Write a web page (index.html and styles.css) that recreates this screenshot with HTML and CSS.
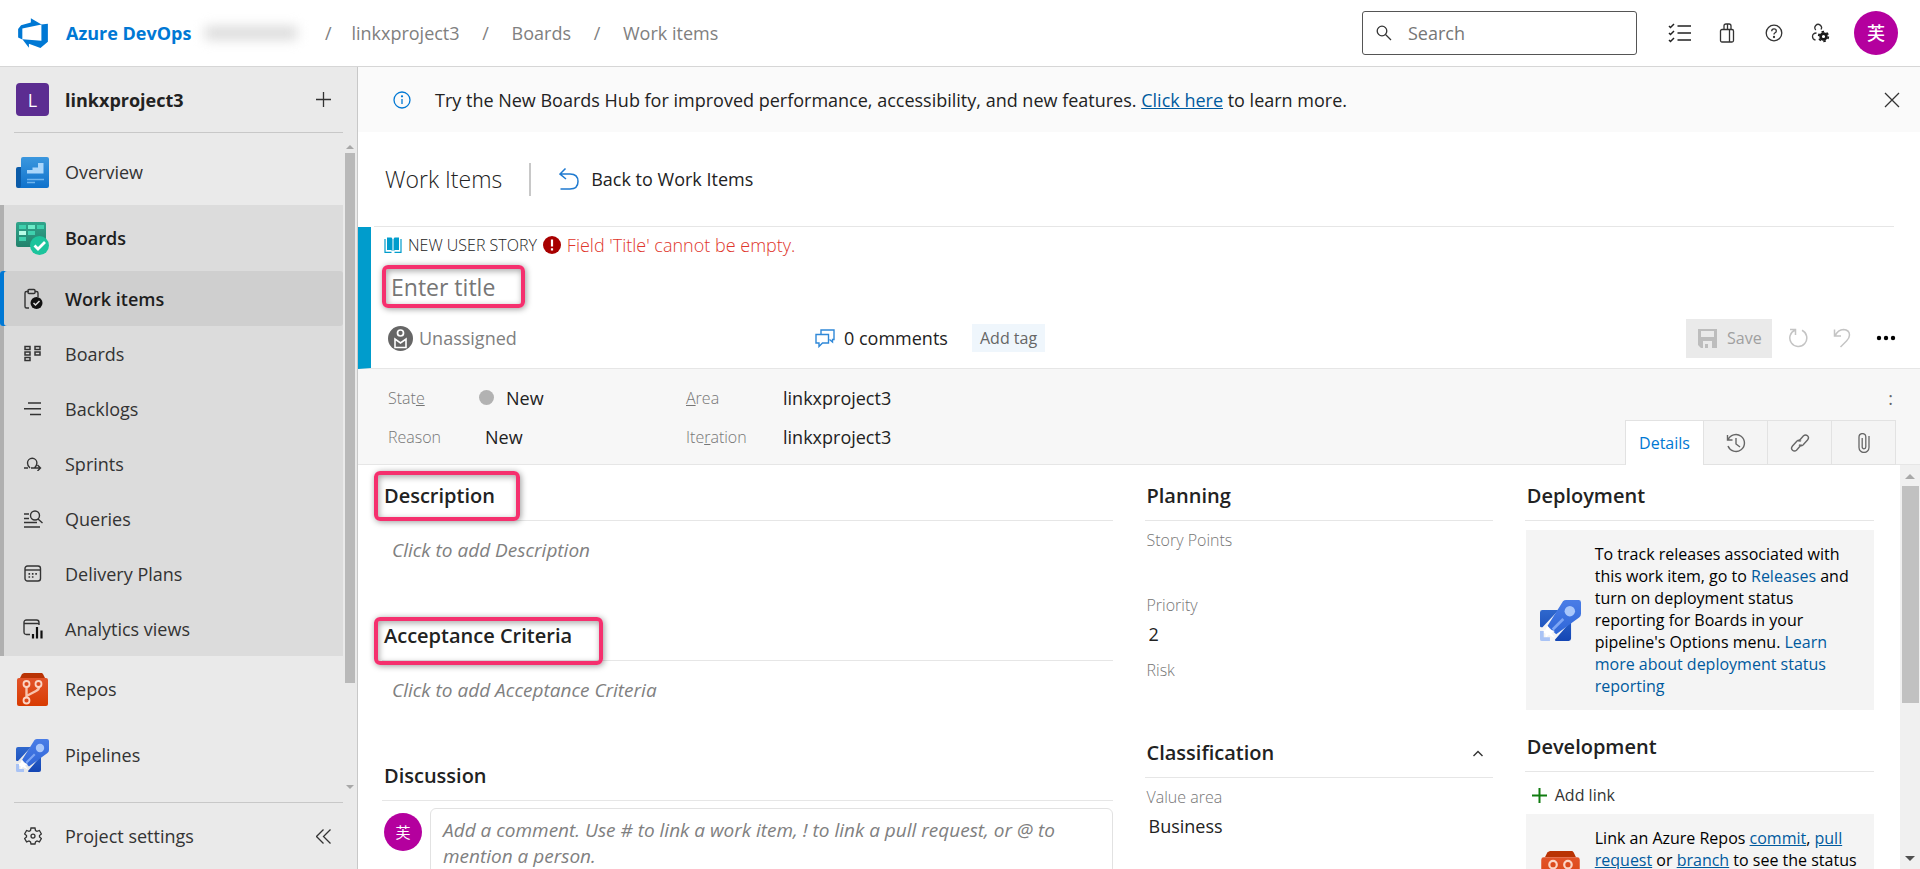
FILE: index.html
```html
<!DOCTYPE html>
<html lang="en">
<head>
<meta charset="utf-8">
<title>New User Story - Boards</title>
<link rel="stylesheet" href="styles.css">
</head>
<body>
<svg class="sprite" aria-hidden="true">
  <defs>
    <linearGradient id="gBlue" x1="0" y1="0" x2="0" y2="1"><stop offset="0" stop-color="#3b97de"/><stop offset="1" stop-color="#0f72cc"/></linearGradient>
    <linearGradient id="gGreen" x1="0" y1="0" x2="0" y2="1"><stop offset="0" stop-color="#31a58c"/><stop offset="1" stop-color="#22826c"/></linearGradient>
    <linearGradient id="gRed" x1="0" y1="0" x2="0" y2="1"><stop offset="0" stop-color="#e2542a"/><stop offset="1" stop-color="#d83b01"/></linearGradient>
    <linearGradient id="gRocket" x1="0" y1="0" x2="0" y2="1"><stop offset="0" stop-color="#4a7de6"/><stop offset="1" stop-color="#2f66d8"/></linearGradient>
    <linearGradient id="gWing" x1="0" y1="0" x2="0" y2="1"><stop offset="0" stop-color="#2f68cd"/><stop offset="1" stop-color="#1446b4"/></linearGradient>
  </defs>
  <symbol id="rocket" viewBox="0 0 33 33">
    <path d="M2 8h13L2 22H1a1 1 0 0 1-1-1V10a2 2 0 0 1 2-2zM25 17v14a2 2 0 0 1-2 2H13a1 1 0 0 1-1-1z" fill="url(#gWing)"/>
    <path d="M18.500 1q1-1 2.500-1h10a2 2 0 0 1 2 2v9q0 2-1.500 3L13 27.500 6 21z" fill="url(#gRocket)"/>
    <path d="M18 14.500l1.500 1.500-8.500 8.500-1.500-1.500z" fill="#7ea6f4"/>
    <circle cx="24" cy="9" r="4.200" fill="#a9c7fb"/>
    <path d="M6 20.500l2 3.500 4 1-3 1.500 3 4-5-2.500-2.500 2.500V27L0 25.500l4.500-1.500z" fill="#fff"/>
    <path d="M0 25h3v5h5v3H1.500A1.500 1.500 0 0 1 0 31.500z" fill="#a9c3f5"/>
  </symbol>
  <symbol id="repo" viewBox="0 0 33 33">
    <path d="M8 0h18l1 1 2 4H4l2-4z" fill="#b93304"/>
    <rect x="1" y="5" width="31" height="28" rx="2" fill="url(#gRed)"/>
    <path d="M10.500 14v10.500M10.500 23l9.500-5q3-1.500 3-4" fill="none" stroke="#f8c3ac" stroke-width="2.400"/>
    <g fill="#dc4a1c" stroke="#fbd5c5" stroke-width="1.800"><circle cx="10.500" cy="11" r="3"/><circle cx="22.500" cy="11" r="3"/><circle cx="10.500" cy="27.500" r="3"/></g>
  </symbol>
</svg>

<header class="topbar">
  <a class="brand" href="#">
    <svg width="34" height="34" viewBox="0 0 16 16"><path fill="#0078d4" d="M15 3.622v8.512L11.500 15l-5.425-1.975v1.958L3.004 10.970l8.951.7V4.005L15 3.622zm-2.984.428L6.994 1v2.001L2.382 4.356 1 6.130v4.029l1.978.873V5.869l9.038-1.818z"/></svg>
    <span>Azure DevOps</span>
  </a>
  <span class="redacted"></span>
  <nav class="crumbs" aria-label="Breadcrumb">
    <span class="slash">/</span><a href="#">linkxproject3</a><span class="slash">/</span><a href="#">Boards</a><span class="slash">/</span><a href="#">Work items</a>
  </nav>
  <label class="search">
    <svg width="16" height="16" viewBox="0 0 16 16" fill="none" stroke="#333" stroke-width="1.300"><circle cx="6" cy="6" r="4.800"/><path d="M9.500 9.500L15 15"/></svg>
    <input type="search" placeholder="Search" aria-label="Search">
  </label>
  <button class="top-btn" aria-label="Work list"><svg width="24" height="20" viewBox="0 0 24 20" fill="none" stroke="#222" stroke-width="1.500"><path d="M9.500 3H23M9.500 10H23M9.500 17H23M1 3l1.500 1.500L6 1M1 10l1.500 1.500L6 8M1 17l1.500 1.500L6 15"/></svg></button>
  <button class="top-btn" aria-label="Marketplace"><svg width="16" height="20" viewBox="0 0 16 20" fill="none" stroke="#333" stroke-width="1.300"><rect x="1.500" y="6.500" width="13" height="12.500" rx="1.500"/><path d="M10.500 6.500v12.500M5 6.500V3q0-2 2-2h3q2 0 2 2v3.500M8.500 1v5.500"/></svg></button>
  <button class="top-btn" aria-label="Help"><svg width="18" height="18" viewBox="0 0 18 18" fill="none" stroke="#333" stroke-width="1.300"><circle cx="9" cy="9" r="7.800"/><path d="M6.700 7.200q0-2.400 2.300-2.400t2.300 2.100q0 1.200-1.200 1.900T9 10.500"/><circle cx="9" cy="13" r=".5" fill="#333"/></svg></button>
  <button class="top-btn" aria-label="User settings"><svg width="19" height="20" viewBox="0 0 19 20" fill="none" stroke="#333" stroke-width="1.300"><path d="M4.800 7A3.300 3.300 0 1 1 10 6.500M5.500 10Q1.500 10 1.500 13.500 1.500 16.500 4.500 17"/><circle cx="12.500" cy="13.500" r="2.900" stroke="#1a1a1a" stroke-width="2.600"/><circle cx="12.500" cy="13.500" r="4.800" stroke="#1a1a1a" stroke-width="1.800" stroke-dasharray="2.500 2.526"/></svg></button>
  <button class="avatar avatar-top" aria-label="Account">芙</button>
</header>

<div class="shell">
  <aside class="sidebar">
    <div class="project">
      <span class="cell"><span class="badge">L</span></span>
      <strong>linkxproject3</strong>
      <button class="plain" aria-label="Add"><svg width="15" height="15" viewBox="0 0 15 15" stroke="#333" stroke-width="1.300"><path d="M7.500 0v15M0 7.500h15"/></svg></button>
    </div>
    <div class="scroller">
      <nav class="menu" aria-label="Project">
        <a class="item big" href="#"><span class="cell"><svg width="33" height="31" viewBox="0 0 33 31"><rect y="10" width="10" height="21" rx="2" fill="#0b5ba8"/><path d="M5 2a2 2 0 0 1 2-2h24a2 2 0 0 1 2 2v27a2 2 0 0 1-2 2H3q2 0 2-3z" fill="url(#gBlue)"/><path d="M11 13h5.500v-2.500H22V6h5.500v10.500H11z" fill="#a9d6fb"/><path d="M11 22.500h17M11 25.500h8" stroke="#6fb5ee" stroke-width="1.500"/></svg></span>Overview</a>
        <div class="group">
          <a class="item big strong" href="#"><span class="cell"><svg width="33" height="33" viewBox="0 0 33 33"><rect width="30" height="25" rx="2" fill="url(#gGreen)"/><g fill="#3fd0ad"><rect x="3" y="3" width="7" height="4"/><rect x="21" y="3" width="7" height="4"/><rect x="12" y="9" width="7" height="4"/><rect x="3" y="15" width="7" height="4"/></g><rect x="12" y="3" width="7" height="4" fill="#6cecc8"/><rect x="3" y="9" width="7" height="4" fill="#b8fbe6"/><circle cx="23.500" cy="23.500" r="9.500" fill="#1cc49c"/><path d="M18.500 23.500l3.500 3.500 7-7" fill="none" stroke="#fff" stroke-width="2.800"/></svg></span>Boards</a>
          <a class="item strong current" href="#" aria-current="page"><span class="cell"><svg width="22" height="22" viewBox="0 0 22 22" fill="none" stroke="#333" stroke-width="1.400"><path d="M7 20H4.500Q3 20 3 18.500V5q0-1.500 1.500-1.500H7M13 3.500h1.500Q16 3.500 16 5v4"/><rect x="6" y="1.500" width="7" height="4" rx="1"/><circle cx="14.500" cy="15" r="6" fill="#111" stroke="none"/><path d="M11.500 15l2 2 4-4" stroke="#ddd" stroke-width="1.500"/></svg></span>Work items</a>
          <a class="item" href="#"><span class="cell"><svg width="18" height="17" viewBox="0 0 18 17" fill="none" stroke="#333" stroke-width="1.500"><rect x="1" y="1.500" width="5" height="3"/><rect x="1" y="7" width="5" height="3"/><rect x="1" y="12.500" width="5" height="3"/><rect x="11" y="1.500" width="5" height="3"/><rect x="11" y="7" width="5" height="3"/></svg></span>Boards</a>
          <a class="item" href="#"><span class="cell"><svg width="18" height="16" viewBox="0 0 18 16" stroke="#333" stroke-width="1.500"><path d="M4 2h13M0 7.800h17M6 13.500h11"/></svg></span>Backlogs</a>
          <a class="item" href="#"><span class="cell"><svg width="18" height="14" viewBox="0 0 18 14" fill="none" stroke="#333" stroke-width="1.400"><path d="M0 11h4M7 11h9M13.500 8l3 3-3 3M6 11Q3.500 9 3.500 6a4.700 4.700 0 1 1 9.400 0q0 3-2.500 5"/></svg></span>Sprints</a>
          <a class="item" href="#"><span class="cell"><svg width="20" height="18" viewBox="0 0 20 18" fill="none" stroke="#333" stroke-width="1.400"><path d="M1 4h5M1 8.500h5M1 12.500h13M1 17h16M15 9l4.500 4"/><circle cx="12" cy="5.500" r="4.500"/></svg></span>Queries</a>
          <a class="item" href="#"><span class="cell"><svg width="18" height="17" viewBox="0 0 18 17" fill="none" stroke="#333" stroke-width="1.400"><rect x="1" y="1" width="15.500" height="15" rx="2.500"/><path d="M1 5h15.500"/><path d="M4.500 8.800h9M4.500 12h6" stroke-dasharray="1.600 1.800" stroke-width="1.700"/></svg></span>Delivery Plans</a>
          <a class="item" href="#"><span class="cell"><svg width="20" height="20" viewBox="0 0 20 20" fill="none" stroke="#333" stroke-width="1.400"><path d="M7 15.500H3.500Q1 15.500 1 13V3.500Q1 1 3.500 1h10Q16 1 16 3.500V6M1 4.500h15"/><path d="M10 19.500V15M14 19.500V8M18.500 19.500v-8" stroke="#111" stroke-width="2.200"/></svg></span>Analytics views</a>
        </div>
        <a class="item big" href="#"><span class="cell"><svg width="33" height="33"><use href="#repo"/></svg></span>Repos</a>
        <a class="item big" href="#"><span class="cell"><svg width="33" height="33"><use href="#rocket"/></svg></span>Pipelines</a>
      </nav>
      <div class="rail" aria-hidden="true"><i class="tri up"></i><i class="thumb"></i><i class="tri down"></i></div>
    </div>
    <div class="settings">
      <a class="item big" href="#"><span class="cell"><svg width="18" height="18" viewBox="0 0 18 18" fill="none" stroke="#333" stroke-width="1.300"><path d="M7 1h4l.5 2.500 1.500.9 2.400-.9 2 3.400L15.500 8.500v1.400l1.900 1.600-2 3.400-2.400-.9-1.500.9L11 17H7l-.5-2.100-1.500-.9-2.400.9-2-3.400 1.900-1.600V8.500L.6 6.900l2-3.400 2.400.9 1.500-.9z"/><circle cx="9" cy="9.100" r="2"/></svg></span>Project settings</a>
      <button class="plain" aria-label="Collapse"><svg width="15" height="15" viewBox="0 0 15 15" fill="none" stroke="#333" stroke-width="1.300"><path d="M7.500 .5l-7 7 7 7M14.500 .5l-7 7 7 7"/></svg></button>
    </div>
  </aside>

  <main class="main">
    <div class="banner">
      <svg width="18" height="18" viewBox="0 0 18 18" fill="none" stroke="#0078d4" stroke-width="1.300"><circle cx="9" cy="9" r="8"/><path d="M9 8v5"/><circle cx="9" cy="5.300" r=".5" fill="#0078d4"/></svg>
      <p>Try the New Boards Hub for improved performance, accessibility, and new features. <a href="#">Click here</a> to learn more.</p>
      <button class="plain" aria-label="Close"><svg width="16" height="16" viewBox="0 0 16 16" stroke="#333" stroke-width="1.300"><path d="M1 1l14 14M15 1L1 15"/></svg></button>
    </div>

    <div class="page-head">
      <h1>Work Items</h1>
      <a class="back" href="#"><svg width="20" height="22" viewBox="0 0 20 22" fill="none" stroke="#1f7ad0" stroke-width="1.500"><path d="M6.500 .5L1 6l6 5M1 6h10q8 0 8 7.500T11 21H1.500"/></svg>Back to Work Items</a>
    </div>

    <section class="wi-head">
      <div class="wi-kind">
        <svg width="18" height="16" viewBox="0 0 18 16" fill="none" stroke="#009ccc" stroke-width="1.200"><path d="M3 .5H7.500L8.500 2V14L7 13H3zM15 .5h-4.500L9.500 2V14l1.500-1H15z" fill="#009ccc" stroke="none"/><path d="M1 2v13.300h6.500M17 2v13.300h-6.500"/></svg>
        <span>NEW USER STORY</span>
        <svg width="18" height="18" viewBox="0 0 18 18"><circle cx="9" cy="9" r="9" fill="#a80000"/><path d="M9 3.500v7M9 12.200v2.300" stroke="#fff" stroke-width="2.200"/></svg>
        <span class="error">Field 'Title' cannot be empty.</span>
      </div>
      <div class="wi-title mark mark-title"><input type="text" placeholder="Enter title" aria-label="Title"></div>
      <div class="wi-actions">
        <button class="who"><svg width="25" height="25" viewBox="0 0 25 25" fill="none" stroke="#fff"><circle cx="12.500" cy="12.500" r="12.500" fill="#666" stroke="none"/><circle cx="12.500" cy="7" r="3" stroke-width="1.700"/><path d="M7 21.500v-8.500l5.500 4 5.500-4v8.500z" stroke-width="1.600"/></svg>Unassigned</button>
        <button class="comments"><svg width="20" height="19" viewBox="0 0 20 19" fill="none" stroke="#2f88d8" stroke-width="1.400"><path d="M6 5V1h13v9.500h-1.500v2.500L14.500 10.500"/><path d="M1 5.500h12.500v8.500H7.500L4 17.500V14H1z"/></svg>0 comments</button>
        <button class="tag">Add tag</button>
        <span class="grow"></span>
        <button class="save" disabled><svg width="19" height="19" viewBox="0 0 19 19"><path d="M0 0h19v19H3L0 16zM3 2v6h13V2zM5 12v7h2v-4h3v4h4v-7z" fill="#bdbdbd" fill-rule="evenodd"/></svg>Save</button>
        <button class="tool" aria-label="Refresh"><svg width="20" height="20" viewBox="0 0 20 20" fill="none" stroke="#c4c4c4" stroke-width="1.500"><path d="M2 1.500h5.500V7M7.300 2A8.500 8.500 0 1 0 14 2.300"/></svg></button>
        <button class="tool" aria-label="Undo"><svg width="18" height="20" viewBox="0 0 18 20" fill="none" stroke="#c4c4c4" stroke-width="1.500"><path d="M1.500 1.500V8H8M2 8Q5 1.500 10.500 1.500q6 .5 6 5.500 0 3-3 6L7.500 19"/></svg></button>
        <button class="tool" aria-label="More"><svg width="20" height="6" viewBox="0 0 20 6"><circle cx="3" cy="3" r="2.200"/><circle cx="10" cy="3" r="2.200"/><circle cx="17" cy="3" r="2.200"/></svg></button>
      </div>
    </section>

    <section class="fields">
      <div class="field-grid">
        <label for="state">Stat<u>e</u></label><span class="state"><i class="dot"></i><input id="state" value="New"></span>
        <label for="area"><u>A</u>rea</label><input id="area" value="linkxproject3">
        <label for="reason">Reason</label><span class="reason"><input id="reason" value="New"></span>
        <label for="iter">Ite<u>r</u>ation</label><input id="iter" value="linkxproject3">
      </div>
      <div class="side">
        <button class="colon" aria-label="Field options">:</button>
        <div class="tabs" role="tablist">
          <button class="tab active" role="tab" aria-selected="true">Details</button>
          <button class="tab" role="tab" aria-label="History"><svg width="20" height="20" viewBox="0 0 20 20" fill="none" stroke="#666" stroke-width="1.400"><path d="M1.500 2v5H6.500M2 7A8.500 8.500 0 1 1 2 13M10 5v6l4 3"/></svg></button>
          <button class="tab" role="tab" aria-label="Links"><svg width="20" height="20" viewBox="0 0 20 20" fill="none" stroke="#666" stroke-width="1.400"><path d="M8.500 8.500L13.500 2.800q2-1.800 4 0t0 4.200L13 12q-2 1.500-4-.3M11.500 11.500L6.500 17.200q-2 1.800-4 0t0-4.200L7 8q2-1.500 4 .3"/></svg></button>
          <button class="tab" role="tab" aria-label="Attachments"><svg width="12" height="20" viewBox="0 0 12 20" fill="none" stroke="#666" stroke-width="1.300"><path d="M11 3v11.500a5 5 0 0 1-10 0V4a3.300 3.300 0 0 1 6.800 0v10a1.800 1.800 0 0 1-3.600 0V5"/></svg></button>
        </div>
      </div>
    </section>

    <div class="body">
      <div class="columns">
        <div class="col">
          <section class="tall">
            <h2><span class="mark mark-desc">Description</span></h2>
            <p class="hint">Click to add Description</p>
          </section>
          <section class="tall">
            <h2><span class="mark mark-acc">Acceptance Criteria</span></h2>
            <p class="hint">Click to add Acceptance Criteria</p>
          </section>
          <section>
            <h2>Discussion</h2>
            <div class="discuss">
              <span class="avatar avatar-small">芙</span>
              <textarea rows="3" aria-label="Comment" placeholder="Add a comment. Use # to link a work item, ! to link a pull request, or @ to mention a person."></textarea>
            </div>
          </section>
        </div>
        <div class="col">
          <section class="planning">
            <h2>Planning</h2>
            <div class="pair"><label for="pts">Story Points</label><input id="pts"></div>
            <div class="pair"><label for="prio">Priority</label><input id="prio" value="2"></div>
            <div class="pair"><label for="risk">Risk</label><input id="risk"></div>
          </section>
          <section>
            <h2>Classification<button class="plain" aria-label="Collapse section"><svg width="10" height="7" viewBox="0 0 10 7" fill="none" stroke="#333" stroke-width="1.400"><path d="M.5 6L5 1.500 9.500 6"/></svg></button></h2>
            <div class="pair"><label for="va">Value area</label><input id="va" value="Business"></div>
          </section>
        </div>
        <div class="col">
          <section class="deploy">
            <h2>Deployment</h2>
            <div class="card">
              <svg width="41" height="41"><use href="#rocket"/></svg>
              <p>To track releases associated with this work item, go to <a href="#">Releases</a> and turn on deployment status reporting for Boards in your pipeline's Options menu. <a href="#">Learn more about deployment status reporting</a></p>
            </div>
          </section>
          <section>
            <h2>Development</h2>
            <button class="add-link"><svg width="15" height="15" viewBox="0 0 15 15" stroke="#107c10" stroke-width="2"><path d="M7.500 0v15M0 7.500h15"/></svg>Add link</button>
            <div class="card card-repo underlined">
              <svg width="41" height="41"><use href="#repo"/></svg>
              <p>Link an Azure Repos <a href="#">commit</a>, <a href="#">pull request</a> or <a href="#">branch</a> to see the status</p>
            </div>
          </section>
        </div>
      </div>
      <div class="rail rail-main" aria-hidden="true"><i class="tri up"></i><i class="thumb"></i><i class="tri down"></i></div>
    </div>
  </main>
</div>
</body>
</html>
```
FILE: styles.css
```css
*, *::before, *::after { box-sizing: border-box; }

body {
  margin: 0;
  height: 100vh;
  display: flex;
  flex-direction: column;
  overflow: hidden;
  background: #fff;
  color: #222;
  font: 18px/24px "Open Sans", "Noto Sans", "Noto Sans CJK SC", sans-serif;
}

h1, h2, p { margin: 0; font-weight: 400; }
a { color: inherit; text-decoration: none; }
svg { display: block; flex: none; }
button, input, textarea { font: inherit; color: inherit; background: none; border: 0; padding: 0; margin: 0; outline: 0; }
input { min-width: 0; }
.sprite { position: absolute; width: 0; height: 0; }
.plain { display: flex; }
.grow { flex: 1; }

/* Top bar */
.topbar {
  flex: none;
  display: flex;
  align-items: center;
  height: 67px;
  padding: 0 22px 0 16px;
  border-bottom: 1px solid #d6d6d6;
}
.brand { display: flex; align-items: center; gap: 16px; color: #0078d4; font-weight: 700; }
.redacted { width: 92px; height: 14px; margin: 0 8px 0 14px; background: #dcdcdc; filter: blur(6px); }
.crumbs { display: flex; flex: 1; color: #808080; }
.slash { width: 52px; text-align: center; }
.crumbs .slash:first-child { width: 46px; }
.search {
  display: flex;
  align-items: center;
  gap: 16px;
  width: 275px;
  height: 44px;
  margin-right: 19px;
  padding: 0 13px;
  border: 1px solid #555;
  border-radius: 3px;
}
.search input { flex: 1; }
.search input::placeholder { color: #767676; }
.top-btn { display: flex; justify-content: center; width: 47px; }
.avatar {
  display: flex;
  align-items: center;
  justify-content: center;
  flex: none;
  border-radius: 50%;
  background: #b4009e;
  color: #fff;
}
.avatar-top { width: 44px; height: 44px; margin-left: 10px; font-size: 18px; font-weight: 500; }

/* Sidebar */
.shell { display: flex; flex: 1; min-height: 0; }
.sidebar {
  flex: none;
  display: flex;
  flex-direction: column;
  width: 358px;
  background: #eaeaea;
  border-right: 1px solid #c8c8c8;
}
.project, .settings { display: flex; align-items: center; flex: none; height: 66px; margin: 0 14px; }
.project { gap: 16px; padding: 0 12px 0 2px; border-bottom: 1px solid #c8c8c8; }
.project strong { flex: 1; font-weight: 700; }
.project { margin-bottom: 6px; }
.settings { padding-right: 12px; border-top: 1px solid #c8c8c8; height: 67px; }
.settings .item { flex: 1; padding-left: 2px; }
.badge {
  display: flex;
  align-items: center;
  justify-content: center;
  width: 33px;
  height: 33px;
  border-radius: 4px;
  background: #5c2d91;
  color: #fff;
}
.scroller { display: flex; flex: 1; min-height: 0; gap: 2px; padding-right: 2px; }
.menu { flex: 1; overflow: hidden; }
.item { display: flex; align-items: center; gap: 16px; height: 55px; padding-left: 16px; color: #333; }
.item.big { height: 66px; }
.cell { display: flex; justify-content: center; flex: none; width: 33px; }
.strong { color: #1e1e1e; font-weight: 600; }
.group { background: #dcdcdc; box-shadow: inset 4px 0 #b0b0b0; }
.current { background: #cfcfcf; box-shadow: inset 4px 0 #0078d4; border-radius: 3px; }
.rail { display: flex; flex-direction: column; align-items: center; width: 10px; }
.thumb { width: 100%; background: #b9b9b9; }
.tri { flex: none; width: 0; border: 4px solid transparent; }
.up { border-top: 0; border-bottom-color: #a8a8a8; }
.down { margin-top: auto; border-bottom: 0; border-top-color: #a8a8a8; }
.scroller .rail { padding: 6px 0 13px; }
.scroller .thumb { flex: 0 1 530px; margin-top: 4px; }

/* Banner and page heading */
.main { display: flex; flex: 1; flex-direction: column; min-width: 0; }
.banner { display: flex; align-items: center; flex: none; height: 65px; padding: 0 20px 0 35px; background: #fafafa; }
.banner p { flex: 1; margin-left: 24px; }
.banner a { color: #005a9e; text-decoration: underline; }
.page-head {
  display: flex;
  align-items: center;
  flex: none;
  height: 95px;
  margin: 0 26px 0 16px;
  padding-left: 11px;
  border-bottom: 1px solid #e6e6e6;
}
.page-head h1 { padding-right: 27px; border-right: 2px solid #c8c8c8; font-size: 23px; font-weight: 300; line-height: 33px; }
.back { display: flex; align-items: center; gap: 12px; margin-left: 28px; }

/* Work item header */
.wi-head { flex: none; height: 142px; padding: 6px 12px 0 13px; border-left: 13px solid #009ccc; border-bottom: 1px solid #e6e6e6; }
.wi-kind { display: flex; align-items: center; gap: 6px; font-size: 16px; font-weight: 300; }
.wi-kind .error { color: #e0352b; font-size: 18px; }
.mark { position: relative; }
.mark::after {
  content: "";
  position: absolute;
  border: 4px solid #f5306e;
  border-radius: 6px;
  box-shadow: 1px 1px 6px rgba(0, 0, 0, .4), inset 1px 2px 6px rgba(0, 0, 0, .35);
  pointer-events: none;
}
.mark-title { display: flex; align-items: center; height: 43px; margin-top: 8px; padding-left: 7px; font-size: 23px; }
.mark-title input { flex: 1; }
.mark-title input::placeholder { color: #767676; }
.mark-title::after { left: -2px; top: 0; width: 143px; height: 43px; }
.wi-actions { display: flex; align-items: center; height: 40px; margin-top: 10px; padding-left: 4px; }
.who, .comments, .save { display: flex; align-items: center; }
.who { gap: 6px; width: 427px; color: #808080; }
.comments { gap: 9px; width: 157px; }
.tag { height: 28px; padding: 0 8px; background: #eff6fc; color: #666; font-size: 16px; }
.save { gap: 10px; width: 86px; height: 39px; margin-right: 4px; padding-left: 12px; background: #eaeaea; color: #a0a0a0; font-size: 16px; }
.tool { display: flex; justify-content: center; width: 44px; }

/* State, area and tabs */
.fields { display: flex; flex: none; justify-content: space-between; height: 96px; background: #f7f7f7; border-bottom: 1px solid #e6e6e6; }
.field-grid {
  display: grid;
  grid-template-columns: 91px 207px 97px 240px;
  grid-auto-rows: 39px;
  align-items: center;
  align-content: start;
  padding: 9px 0 0 30px;
}
.field-grid label, .pair label { color: #767676; font-size: 16px; font-weight: 300; }
.state { display: flex; align-items: center; gap: 12px; }
.dot { flex: none; width: 15px; height: 15px; border-radius: 50%; background: #b2b2b2; }
.reason { padding-left: 6px; }
.side { display: flex; flex-direction: column; align-items: flex-end; justify-content: space-between; padding: 17px 24px 0 0; }
.colon { padding-right: 3px; color: #666; }
.tabs { display: flex; height: 45px; margin-bottom: -1px; border: 1px solid #e2e2e2; border-bottom: 0; }
.tab { display: flex; align-items: center; justify-content: center; width: 64px; background: #f4f4f4; border-left: 1px solid #e2e2e2; border-bottom: 1px solid #e2e2e2; }
.tab.active { width: 77px; background: #fff; border: 0; color: #0078d4; font-size: 16px; }

/* Work item body */
.body { display: flex; flex: 1; min-height: 0; }
.columns { display: grid; flex: 1; grid-template-columns: 730fr 348fr 349fr; gap: 32px; padding: 7px 26px 0 24px; overflow: hidden; }
.col { min-width: 0; }
.col h2 {
  display: flex;
  align-items: center;
  justify-content: space-between;
  height: 49px;
  padding: 0 10px 0 2px;
  border-bottom: 1px solid #e6e6e6;
  font-size: 20px;
  font-weight: 600;
}
.tall { height: 140px; }
.hint { padding: 17px 0 0 10px; color: #808080; font-size: 19px; font-style: italic; }
.mark-desc::after { left: -10px; top: -13px; width: 146px; height: 50px; }
.mark-acc::after { left: -10px; top: -7px; width: 229px; height: 48px; }
.discuss { display: flex; gap: 8px; padding: 7px 0 0 2px; }
.avatar-small { width: 38px; height: 38px; margin-top: 5px; font-size: 15px; }
.discuss textarea {
  flex: 1;
  height: 90px;
  padding: 8px 12px;
  border: 1px solid #e2e2e2;
  border-radius: 6px;
  font-size: 19px;
  line-height: 26px;
  resize: none;
  overflow: hidden;
}
.discuss textarea::placeholder { color: #808080; font-style: italic; }
.planning { height: 257px; }
.pair { display: flex; flex-direction: column; height: 65px; padding: 7px 0 0 2px; }
.pair input { padding: 5px 0 0 2px; }
.deploy { height: 251px; }
.card { display: flex; align-items: center; gap: 14px; margin: 9px 0 0 1px; padding: 13px 12px 13px 14px; background: #f4f4f4; color: #000; font-size: 16px; line-height: 22px; }
.card a { color: #005a9e; }
.underlined a { text-decoration: underline; }
.card-repo { align-items: flex-start; height: 116px; }
.card-repo svg { margin-top: 24px; }
.add-link { display: flex; align-items: center; gap: 8px; height: 24px; margin: 11px 0 0 7px; color: #333; font-size: 16px; }
.add-link + .card { margin-top: 7px; }
.rail-main { width: 20px; padding: 9px 0 8px; background: #f0f0f0; }
.rail-main .thumb { flex: 0 1 217px; width: 17px; margin-top: 7px; background: #c1c1c1; }
.rail-main .tri { border-width: 5px; }
.rail-main .up { border-top-width: 0; }
.rail-main .down { border-bottom-width: 0; border-top-color: #505050; }
```
